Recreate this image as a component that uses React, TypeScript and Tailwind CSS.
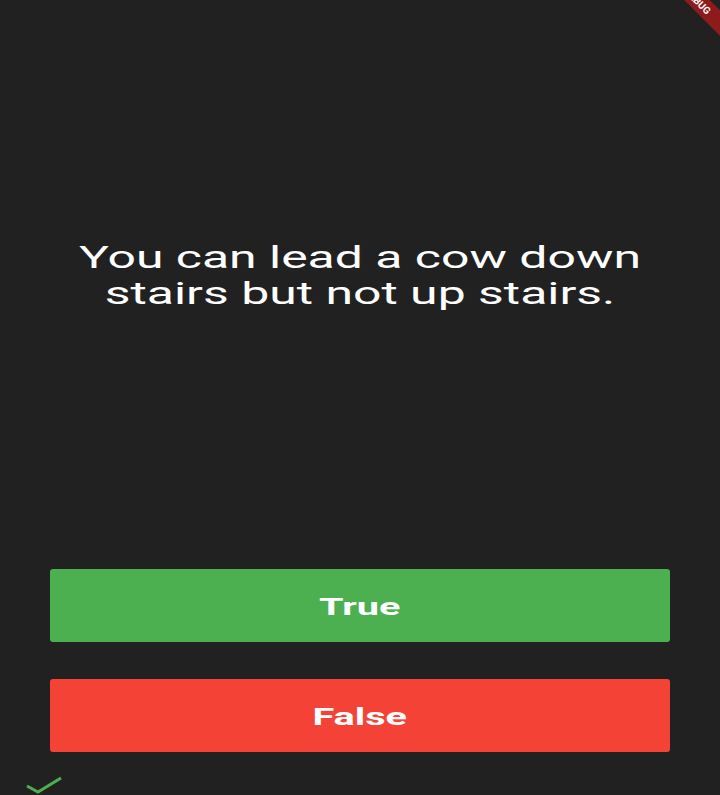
export default function App() {
  return (
    <div className="relative h-[795px] w-[720px] overflow-hidden bg-[#212121] font-['Roboto',sans-serif]">
      {/* debug banner */}
      <div className="absolute right-[-38px] top-[-8px] w-[120px] h-[18px] rotate-45 bg-[#8e1b1b] flex items-center justify-center text-[10px] font-bold text-white">
        DEBUG
      </div>

      <div className="flex flex-col h-full">
        {/* Question */}
        <div className="h-[552px] flex items-center justify-center px-6">
          <p className="text-white text-[31px] leading-[36px] text-center scale-x-[1.61] w-[350px]">
            You can lead a cow down stairs but not up stairs.
          </p>
        </div>

        {/* Answers */}
        <div className="flex flex-col gap-[37px] px-[50px] pt-[18px]">
          <button className="h-[73px] rounded-[3px] bg-[#4caf50] text-white font-bold text-[24px] pt-[3px]">
            <span className="inline-block scale-x-[1.65]">True</span>
          </button>
          <button className="h-[73px] rounded-[3px] bg-[#f44336] text-white font-bold text-[24px] pt-[3px]">
            <span className="inline-block scale-x-[1.65]">False</span>
          </button>
        </div>

        {/* Score keeper */}
        <div className="flex px-[24px] pt-[23px]">
          <svg width="40" height="20" viewBox="0 0 40 20" className="text-[#4caf50]">
            <polyline points="3,11 14,17 37,3" fill="none" stroke="currentColor" strokeWidth="3" />
          </svg>
        </div>
      </div>
    </div>
  );
}
